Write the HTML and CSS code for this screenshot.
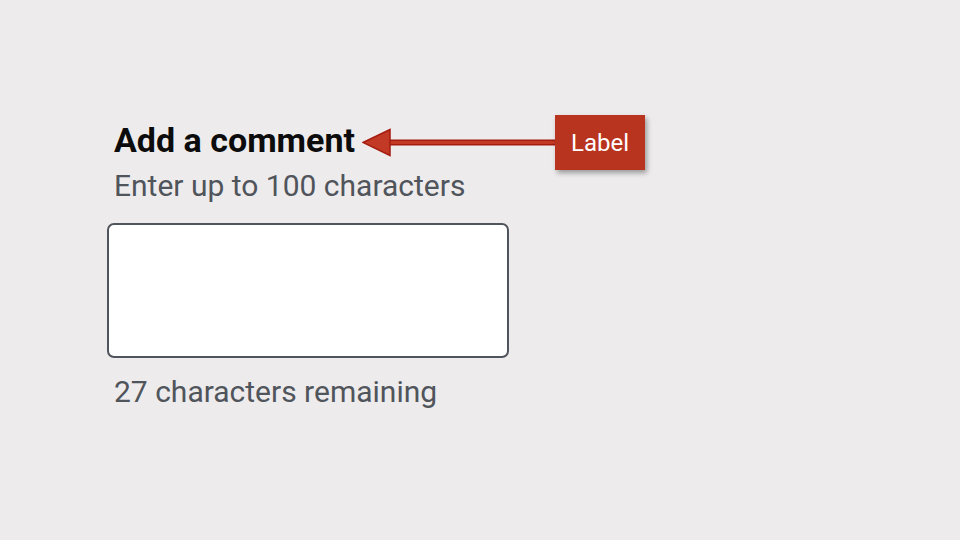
FILE: index.html
```html
<!DOCTYPE html>
<html>
<head>
<meta charset="utf-8">
<link rel="stylesheet" href="styles.css">
</head>
<body>
<main class="page">
  <section class="field">
    <div class="title-row">
      <h1 class="title">Add a comment</h1>
      <div class="callout">
        <svg class="arrow" width="193" height="55" viewBox="0 0 193 55">
          <rect x="25" y="24.5" width="168" height="6" fill="#a61d10"/>
          <rect x="25" y="26" width="168" height="3" fill="#c23a26"/>
          <polygon points="1,27.5 28,14.5 28,40.5" fill="#c23a26" stroke="#a61d10" stroke-width="1.5" stroke-linejoin="miter"/>
        </svg>
        <div class="tag">Label</div>
      </div>
    </div>
    <p class="hint">Enter up to 100 characters</p>
    <div class="box"></div>
    <p class="count">27 characters remaining</p>
  </section>
</main>
</body>
</html>
```
FILE: styles.css
```css
html, body {
  margin: 0;
  padding: 0;
  background: #edebec;
}
body {
  width: 960px;
  height: 540px;
  overflow: hidden;
  font-family: Roboto, "Liberation Sans", sans-serif;
}
.page {
  padding: 120px 0 0 107px;
}
.field {
  display: flex;
  flex-direction: column;
  align-items: flex-start;
}
.title-row {
  display: flex;
  align-items: flex-start;
  padding-left: 7px;
  height: 40px;
}
.title {
  margin: 0;
  font-size: 34px;
  font-weight: 700;
  line-height: 40px;
  color: #0c0c0c;
}
.callout {
  display: flex;
  align-items: center;
  margin-left: 7px;
  margin-top: -5px;
}
.arrow {
  display: block;
}
.tag {
  width: 90px;
  height: 55px;
  background: #b9341f;
  color: #fff;
  font-size: 24px;
  display: flex;
  align-items: center;
  justify-content: center;
  box-shadow: 2px 3px 5px rgba(0,0,0,0.35);
}
.hint {
  margin: 8px 0 0;
  padding-left: 7px;
  font-size: 30px;
  line-height: 36px;
  color: #50545b;
}
.box {
  margin-top: 19px;
  width: 398px;
  height: 131px;
  background: #fff;
  border: 2px solid #50545b;
  border-radius: 7px;
}
.count {
  margin: 16px 0 0;
  padding-left: 7px;
  font-size: 30px;
  line-height: 36px;
  color: #50545b;
}
```
